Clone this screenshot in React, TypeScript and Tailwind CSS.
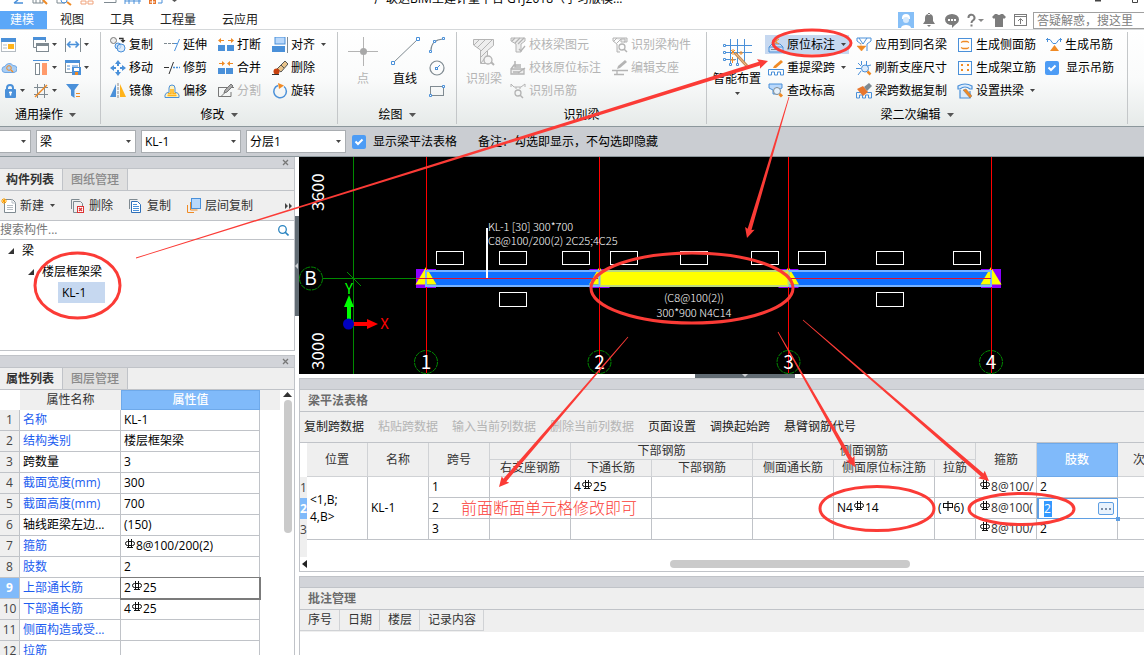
import React, { ReactNode } from "react";

const BLUE = "#4a90d9";
const GREY = "#7f8a91";
const ORANGE = "#f08a24";
const PALE = "#b4b4b4";

function Svg({ children, w = 16, h = 16 }: { children: ReactNode, w?: number, h?: number }) {
    return (
        <svg width={w} height={h} viewBox={`0 0 ${w} ${h}`} fill="none" className="shrink-0">
            {children}
        </svg>
    );
}

// Small ribbon icons
const icons: Record<string, ReactNode> = {
    form: <Svg><rect x="0.5" y="2.5" width="14" height="12" fill="#fff" stroke="#b5bcc2" /><rect x="0" y="1" width="15" height="4" fill={BLUE} /><path d="M2 8h4M2 11h4" stroke="#b5bcc2" /><rect x="7" y="7" width="6" height="5" fill="#ffb31a" /></Svg>,
    cloud: <Svg><path d="M4 12.500a3 3 0 0 1 0-6 4.500 4.500 0 0 1 8-1 3.500 3.500 0 0 1 1 7z" fill="#a9cdf3" stroke="#6fa8e6" /><circle cx="8" cy="8" r="2.300" stroke={ORANGE} /><path d="M10 10l2 2" stroke={ORANGE} strokeWidth="1.500" /></Svg>,
    lock: <Svg><path d="M6 7V5a3 3 0 0 1 6 0v2" stroke={BLUE} strokeWidth="2" /><rect x="4" y="6" width="11" height="9" rx="1" fill={BLUE} /><path d="M9.500 8.500v4M8 9.500h3" stroke="#fff" strokeWidth="1.500" /></Svg>,
    windows: <Svg><path d="M4 10.500H.5V1h12v4" stroke={GREY} /><rect x="0" y="0" width="13" height="3" fill={BLUE} /><rect x="3.500" y="7.500" width="12" height="7" fill="#fff" stroke={GREY} /><rect x="3" y="6" width="13" height="3" fill={GREY} /></Svg>,
    columns: <Svg><path d="M0 .5h16" stroke={BLUE} /><rect x="2.500" y="3.500" width="4" height="11" fill="#fff" stroke={GREY} /><rect x="9" y="3" width="5" height="12" fill="#ff9a6b" /></Svg>,
    grid: <Svg><path d="M4.500 1v14M11.500 1v14M1 4.500h14M1 11.500h14" stroke={GREY} /><path d="M2 14L14 2" stroke={ORANGE} strokeWidth="1.500" /></Svg>,
    measure: <Svg><path d="M.5 1v14M15.500 1v14" stroke={GREY} /><path d="M3 7.500h10M5.500 4.500L2.500 7.500l3 3M10.500 4.500l3 3-3 3" stroke={BLUE} strokeWidth="1.500" /></Svg>,
    saveWin: <Svg><rect x=".5" y="1.500" width="14" height="11" fill="#fff" stroke={GREY} /><rect x="0" y="0" width="15" height="3" fill={BLUE} /><path d="M2 6h3M2 9h3M7 6h6" stroke={BLUE} /><rect x="7" y="7" width="9" height="8" fill={BLUE} /><rect x="9" y="8" width="5" height="3" fill="#fff" /><rect x="10" y="12" width="3" height="3" fill={ORANGE} /></Svg>,
    filter: <Svg><path d="M1 1h13L9.500 7v8L6 12.500V7z" fill={BLUE} /><path d="M11 10.500h4M11 13.500h4" stroke={ORANGE} /></Svg>,
    copy: <Svg><circle cx="3.500" cy="3.500" r="3" fill="#eee" stroke="#777" /><path d="M9 1.500h4v2" stroke="#333" strokeWidth="1.300" /><path d="M10.500 3h5L13 6z" fill="#333" /><circle cx="8" cy="9" r="3" fill="#cfe3f8" stroke={BLUE} /><circle cx="11" cy="11" r="4" fill="#cfe3f8" fillOpacity=".7" stroke={BLUE} /></Svg>,
    move: <Svg><path d="M8 0l3 4H5zM8 16l3-4H5zM0 8l4-3v6zM16 8l-4-3v6z" fill={BLUE} /><path d="M8 3v3M8 10v3M3 8h3M10 8h3" stroke={BLUE} strokeWidth="2" /></Svg>,
    mirror: <Svg><path d="M6 1v13H0z" fill={BLUE} /><path d="M8 0v16" stroke="#888" strokeDasharray="3 1" /><path d="M10 1v13h6z" fill="#ffb31a" /></Svg>,
    extend: <Svg><path d="M0 6.500h10" stroke={GREY} strokeDasharray="3 1" /><path d="M10 6.500h3" stroke={BLUE} /><path d="M15.500 2l-5 12" stroke={BLUE} /></Svg>,
    trim: <Svg><path d="M0 7.500h5" stroke="#333" /><path d="M9.500 2L5 14" stroke="#333" /><path d="M9 7.500h7" stroke={BLUE} strokeDasharray="2 1" strokeWidth="1.500" /></Svg>,
    offset: <Svg><path d="M1 14.500h14v-2.500q-1-3-4-2.500V5a3 3 0 0 0-6 0v4.500q-3-.5-4 2.500z" fill="#fff3c4" stroke={BLUE} /><path d="M3.500 12.500h9M7 6v4.500H4M9 6v4.500h3" stroke="#ffb31a" strokeWidth="1.500" /></Svg>,
    split: <Svg><rect x="0" y="8" width="7" height="6" fill={BLUE} /><rect x="9" y="8" width="7" height="6" fill={BLUE} /><path d="M6 3.500H1M10 3.500h5" stroke={ORANGE} /><path d="M3 1L0 3.500 3 6zM13 1l3 2.500L13 6z" fill={ORANGE} /></Svg>,
    merge: <Svg><rect x="0" y="8" width="7" height="6" fill={BLUE} /><rect x="8" y="8" width="7" height="6" fill={BLUE} /><path d="M1 3.500h5M10 3.500h5" stroke={ORANGE} /><path d="M4 1l3 2.500L4 6zM12 1L9 3.500 12 6z" fill={ORANGE} /></Svg>,
    cut: <Svg><path d="M9 4.500H.5v9H13V9" stroke="#777" /><path d="M0 4.500h16M3 13.500l4-4" stroke="#777" /><path d="M6 10l1-3 6-6 2 2-6 6z" fill="#aaa" stroke="#777" /></Svg>,
    align: <Svg><rect x="3" y="0" width="10" height="7" fill="#b9d8fb" stroke={BLUE} /><rect x="0" y="9" width="13" height="6" fill={BLUE} /><path d="M15.500 0v16" stroke={GREY} /></Svg>,
    erase: <Svg><path d="M13 1l3 3-7 8-4-3z" fill="#e8c48c" stroke="#555" /><path d="M9 5l3 3" stroke="#555" /><circle cx="4.500" cy="11.500" r="3" fill="#c8410e" /><path d="M0 14.500h7" stroke="#333" /></Svg>,
    rotate: <Svg><path d="M6 2.500a6.300 6.300 0 1 0 6 1" stroke={BLUE} strokeWidth="1.500" /><path d="M6 0l6 2.500L7 6z" fill={ORANGE} /></Svg>,
    arc: <Svg><path d="M2 13Q2.500 3 14 2" stroke={GREY} strokeWidth="1.200" /><path d="M.5 13.500h2v2h-2zM4.500 3.500h2v2h-2zM13.500.5h2v2h-2z" fill="#fff" stroke={BLUE} /></Svg>,
    circle: <Svg><circle cx="8" cy="8" r="7" stroke={GREY} strokeWidth="1.200" /><path d="M8 8l3-3" stroke={BLUE} /><rect x="6.500" y="7.500" width="2" height="2" fill="#fff" stroke={BLUE} /></Svg>,
    rect: <Svg><rect x="1.500" y="3.500" width="13" height="9" stroke={GREY} /><path d="M.5 11.500h2v2h-2zM13.500 2.500h2v2h-2z" fill="#fff" stroke={BLUE} /></Svg>,
    beamCheck: <Svg><path d="M1 1h14v3l-4 3v8H6V7L1 4z" stroke={PALE} fill="#eee" /><path d="M2 4l3-3M5 6l5-5M8 7l6-6M9 12l2 2 4-5" stroke={PALE} strokeWidth="1.300" /></Svg>,
    noteCheck: <Svg><path d="M1 9h13v5H1zM1 9l3-4h7" stroke={PALE} fill="#eee" strokeWidth="1.300" /><path d="M5 1v6h6M3 12h7M8 13l7-5" stroke={PALE} strokeWidth="1.500" /></Svg>,
    hangFind: <Svg><path d="M1 1l3 3h7l4-3M1 4v-3M15 4v-3M6 4v2M10 4v2" stroke={PALE} /><circle cx="8" cy="10" r="3" stroke={PALE} strokeWidth="1.300" /><path d="M10 12l3 3" stroke={PALE} strokeWidth="1.500" /></Svg>,
    beamFind: <Svg><path d="M1 1h14v4h-3M1 1v3l4 3v8h3" stroke={PALE} fill="#eee" /><path d="M2 4l3-3M5 6l4-4M9 2h4v3H9z" stroke={PALE} /><circle cx="10" cy="10" r="3" stroke={PALE} strokeWidth="1.300" /><path d="M12 12l3 3" stroke={PALE} strokeWidth="1.500" /></Svg>,
    editSeat: <Svg><path d="M0 10.500h16M2 14.500h10M5 11v3" stroke={PALE} strokeWidth="1.300" /><path d="M5 9l1-3 7-6 2 2-7 6z" fill={PALE} /></Svg>,
    inPlace: <Svg><path d="M1 10h14v5H1zM1 10l3-3h8l3 3" stroke={BLUE} fill="#cfe0f5" /><path d="M3 12.500h9" stroke={GREY} /><path d="M8 0v7M5 3l6 4M11 2L5 6" stroke={ORANGE} /></Svg>,
    respan: <Svg><path d="M.5 15V9.500h15V15h-3v-3h-3v3h-3v-3h-3v3z" stroke={BLUE} /><path d="M5 8l1-2 7-6 2 2-7 6z" fill={ORANGE} /></Svg>,
    elevation: <Svg><path d="M1 1h13v4l-4 2v4H5V7L1 5z" fill="#b9d8fb" stroke={BLUE} /><circle cx="9" cy="8" r="3.500" fill="#e5f1fd" stroke={GREY} /><path d="M11.500 11l2.500 2.500" stroke={ORANGE} strokeWidth="3" /></Svg>,
    apply: <Svg><path d="M1 1h14v3l-4 3v7M1 1v3l4 3M3 1l4 6 4-6" stroke={BLUE} /><path d="M5 6v4M1 9h9l-4.500 5z" fill={ORANGE} stroke={ORANGE} strokeWidth="0.500" /></Svg>,
    refresh: <Svg><path d="M0 8.500h5M5.500 1v4M2 3l3 3M10.500 1v4M11 6l4-1M5 11l-3 4" stroke={BLUE} /><circle cx="9" cy="8.500" r="3.500" fill="#dcebfb" stroke={BLUE} /><path d="M11.500 11.500l3 3" stroke={ORANGE} strokeWidth="2.500" /></Svg>,
    spanCopy: <Svg><path d="M.5 15V9.500h15V15h-3v-3h-3v3h-3v-3h-3v3z" stroke={BLUE} /><path d="M1 6l6-3 5 6-5 4z" fill="#e8772e" /><path d="M8 4l5-4 3 3-5 5z" fill={GREY} /></Svg>,
    sideBar: <Svg><rect x="1.500" y="1.500" width="13" height="13" stroke={BLUE} /><path d="M4 5.500l2-1h4l2 1M4 10.500l2 1h4l2-1" stroke={ORANGE} strokeWidth="1.300" /></Svg>,
    erectBar: <Svg><rect x="1.500" y="1.500" width="13" height="13" stroke={BLUE} /><path d="M4 4h2v2H4zM10 4h2v2h-2zM4 9h2v2H4zM10 9h2v2h-2z" fill={ORANGE} /></Svg>,
    arch: <Svg><path d="M1 6V3q7-4 14 0v3h-2q-5-4-10 0zM3 7v8h10V8" stroke={BLUE} fill="#dcebfb" strokeWidth="1.200" /><path d="M6 7l3-1 6 7-2 2z" fill={ORANGE} stroke="#777" strokeWidth=".5" /></Svg>,
    hang: <Svg><path d="M0 2.500h4l3 4h3l3-4h3M1.500 1v4M14.500 1v4" stroke={BLUE} /><path d="M8.500 8l4.500 6H4z" fill={ORANGE} /></Svg>,
    newDoc: <Svg><path d="M3.500 1.500h8l3 3v10h-11z" fill="#fff" stroke={GREY} /><path d="M11 1v4h4M6 7.500h6M6 9.500h6M6 11.500h6" stroke="#b5bcc2" /><path d="M3 0v6M0 3h6M1 1l4 4M5 1L1 5" stroke="#ffa000" /></Svg>,
    delDoc: <Svg><path d="M1.500 11V1.500h8M3.500 14.500v-11h7l2 2v3M3.500 14.500h4" stroke={GREY} /><rect x="7.500" y="8.500" width="6" height="6" fill="#fff" stroke="#d33" /><path d="M9 10l3 3M12 10l-3 3" stroke="#d33" strokeWidth="1.300" /></Svg>,
    copyDoc: <Svg><path d="M1.500 11V1.500h8" stroke={GREY} /><path d="M3.500 3.500h6l3 3v8h-9z" fill="#fff" stroke="#2f6fb8" /><path d="M5 6.500h4M5 8.500h6M5 10.500h6M5 12.500h6" stroke={BLUE} /></Svg>,
    layerCopy: <Svg><path d="M1.500 7v7.500H8M4.500 4v8h7" stroke={ORANGE} /><rect x="5.500" y=".5" width="9" height="10" fill="#b9d8fb" stroke={BLUE} /></Svg>,
};

const bigIcons: Record<string, ReactNode> = {
    point: <Svg w={30} h={30}><path d="M0 15.500h30M15.500 1v29" stroke={PALE} /><circle cx="15.500" cy="15.500" r="3.500" fill="#a8a8a8" /></Svg>,
    line: <Svg w={30} h={30}><path d="M3 27L28 3" stroke={GREY} /><path d="M1.500 25.500h3v3h-3zM26.500 1.500h3v3h-3z" fill="#fff" stroke={BLUE} /></Svg>,
    beam: <Svg w={24} h={30}><path d="M1.500 3.500h20v6l-6 5v13h-7V14l-7-5z" fill="#eee" stroke={PALE} /><path d="M2 9l6-6M5 12l9-9M9 15L20 4M9 21l6-6M9 27l4-5" stroke={PALE} /><circle cx="16" cy="24" r="4" fill="#f5f5f5" stroke={PALE} strokeWidth="1.300" /><path d="M19 26l3 3" stroke={PALE} strokeWidth="2" /></Svg>,
    smart: <Svg w={30} h={30}><path d="M2 9.500h28M2 16.500h28M2 23.500h12M8.500 3v26M15.500 3v26M22.500 3v26" stroke={BLUE} /><path d="M1.500 8.500h2v2h-2zM1.500 15.500h2v2h-2zM1.500 22.500h2v2h-2zM7.500 27.500h2v2h-2zM14.500 27.500h2v2h-2z" fill="#fff" stroke={BLUE} /><path d="M9 14l4 4M13 14l-4 4M11 13v6M8 24h5M10.500 21v6M17 17h4M19 15v4" stroke={ORANGE} /><path d="M13 17l12 13" stroke="#c98a52" strokeWidth="3" /><path d="M13.500 17.500l11 12" stroke="#f4c690" /></Svg>,
};

function Caret() {
    return <svg width="5" height="3" viewBox="0 0 5 3" className="shrink-0"><path d="M0 0h5L2.500 3z" fill="#444" /></svg>;
}

type ToolProps = { icon: string, label?: string, arrow?: boolean, disabled?: boolean, active?: boolean };

function Tool({ icon, label, arrow, disabled, active }: ToolProps) {
    return (
        <button disabled={disabled} aria-label={label ?? icon} className={`flex h-[19px] items-center gap-[3px] whitespace-nowrap px-[3px] disabled:text-[#b4b4b4] ${active ? "bg-[#c6d8f0]" : ""}`}>
            {icons[icon]}
            {label && <span>{label}</span>}
            {arrow && <span className={label ? "pl-[3px]" : ""}><Caret /></span>}
        </button>
    );
}

function BigTool({ icon, label, arrow, disabled }: ToolProps) {
    return (
        <button disabled={disabled} className="flex flex-col items-center gap-[5px] whitespace-nowrap pt-[3px] disabled:text-[#b4b4b4]">
            {bigIcons[icon]}
            <span>{label}</span>
            {arrow && <Caret />}
        </button>
    );
}

function Column({ children }: { children: ReactNode }) {
    return <div className="grid auto-rows-[23px] items-center justify-items-start">{children}</div>;
}

function Group({ title, arrow, className, children }: { title: string, arrow?: boolean, className: string, children: ReactNode }) {
    return (
        <>
            <div className={`flex shrink-0 flex-col pt-[3px] ${className}`}>
                <div className="flex h-[70px]">{children}</div>
                <div className="flex h-[23px] items-center justify-center gap-[6px]">
                    {title}
                    {arrow && <svg width="7" height="4" viewBox="0 0 7 4"><path d="M0 0h7L3.500 4z" fill="#555" /></svg>}
                </div>
            </div>
            <div className="my-[2px] w-px shrink-0 bg-[#c4c7c9]" />
        </>
    );
}

function Check({ label }: { label: string }) {
    return (
        <label className="flex items-center gap-[7px] whitespace-nowrap">
            <span className="relative flex">
                <input type="checkbox" defaultChecked className="size-[14px] appearance-none rounded-[2px] bg-[#4d9cf5]" />
                <svg width="14" height="14" viewBox="0 0 14 14" className="pointer-events-none absolute inset-0"><path d="M3.500 6.500L6 9l4.500-4.500" fill="none" stroke="#fff" strokeWidth="2" /></svg>
            </span>
            {label}
        </label>
    );
}

function TitleBar() {
    return (
        <div className="relative flex h-[11px] items-end overflow-hidden">
            <svg width="180" height="11" viewBox="0 0 180 11" fill="none">
                <path d="M14 3h9M18 0l-4 3" stroke={BLUE} strokeWidth="1.500" />
                <path d="M33 0v3h10V0M36 0v3M40 0v3" stroke={GREY} /><path d="M43 0l4 4" stroke={ORANGE} strokeWidth="2" />
                <path d="M57 0v3h8" stroke={GREY} /><circle cx="64" cy="0" r="3" stroke={BLUE} /><path d="M67 2l4 3" stroke={ORANGE} strokeWidth="2" />
                <path d="M81 1h5v3h-5zM88 1h5v3h-5z" stroke="#f0a27a" />
                <path d="M104 2.500h12V0" stroke={GREY} />
                <path d="M125 4V0M129 4V0M134 4V0M139 4V0M125 1h16" stroke={BLUE} />
                <path d="M149 0h7v4h-7z" fill="#e8772e" /><path d="M150 2h5M152.500 0v4" stroke="#fff" /><path d="M158 3h4V0" stroke={BLUE} />
                <path d="M172 0h5l-2.500 2z" fill="#555" />
            </svg>
            <h1 className="ml-[194px] -translate-y-1 whitespace-nowrap leading-4">广联达BIM土建计量平台 GTJ2018（学习版模...</h1>
            <svg width="60" height="11" viewBox="0 0 60 11" className="ml-auto" fill="none"><path d="M11 .5h6" stroke="#444" strokeWidth="2" /><path d="M48.500 0v2.500h5V0" stroke="#444" /></svg>
        </div>
    );
}

function Tabs() {
    return (
        <nav className="flex h-[19px] items-stretch border-b border-[#d5d8da] text-[#222]">
            <button className="bg-[#5ba7f8] pl-[10px] pr-[13px] text-white">建模</button>
            <button className="px-[13px]">视图</button>
            <button className="px-[13px]">工具</button>
            <button className="px-[13px]">工程量</button>
            <button className="px-[13px]">云应用</button>
            <div className="ml-auto flex items-center text-[#808080]">
                <svg width="130" height="16" viewBox="898 11 130 16" fill="none" className="mr-[5px]">
                    <rect x="898" y="11" width="16" height="16" fill="#86bff7" />
                    <path d="M901 27c0-4 10-4 10 0zM902 17a4 4 0 0 1 8 0v1h-8z" fill="#fff" /><circle cx="906" cy="19" r="3" fill="#d6eafd" />
                    <path d="M923 23h12l-2-3v-3a4 4 0 0 0-8 0v3zM927 24h4l-2 2zM928 12h2v2h-2z" fill="#7c7c7c" />
                    <ellipse cx="952" cy="18.500" rx="7" ry="5.500" fill="#7c7c7c" /><path d="M952 22v5l4-4z" fill="#7c7c7c" /><path d="M948 18h2v2h-2zM951 18h2v2h-2zM954 18h2v2h-2z" fill="#fff" />
                    <path d="M968.500 17a3 3 0 1 1 4.500 2.300q-1.500.7-1.500 2.700M971.500 23.500v2" stroke="#7c7c7c" strokeWidth="2" /><path d="M978 18h6l-3 3z" fill="#888" />
                    <path d="M995 13h2q2 2 4 0h2l3 3-2 2-1-1v9h-8v-9l-1 1-2-2z" fill="#7c7c7c" />
                    <rect x="1014.500" y="13.500" width="12" height="11" stroke="#7c7c7c" /><path d="M1014 15.500h13M1020.500 23v-5M1018 20l2.500-2.500L1023 20" stroke="#7c7c7c" />
                </svg>
                <input aria-label="搜索" placeholder="答疑解惑，搜这里" className="h-[17px] w-[111px] border border-r-0 border-[#a0a0a0] pl-[3px] placeholder:text-[#808080]" />
            </div>
        </nav>
    );
}

function Ribbon() {
    return (
        <div className="flex h-[97px] overflow-hidden border-b border-[#8c979c] bg-linear-to-b from-white via-[#fafbfb] to-[#e6eae9]">
            <Group title="通用操作" arrow className="w-[100px] pr-[9px]">
                <div className="-ml-[2px] grid auto-rows-[23px] grid-cols-[32px_32px_32px] items-center">
                    <Tool icon="form" /><Tool icon="windows" arrow /><Tool icon="measure" arrow />
                    <Tool icon="cloud" /><Tool icon="columns" arrow /><Tool icon="saveWin" arrow />
                    <Tool icon="lock" arrow /><Tool icon="grid" arrow /><Tool icon="filter" />
                </div>
            </Group>
            <Group title="修改" arrow className="w-[236px]">
                <div className="flex gap-[5px] pl-[6px]">
                    <Column><Tool icon="copy" label="复制" /><Tool icon="move" label="移动" /><Tool icon="mirror" label="镜像" /></Column>
                    <Column><Tool icon="extend" label="延伸" /><Tool icon="trim" label="修剪" /><Tool icon="offset" label="偏移" /></Column>
                    <Column><Tool icon="split" label="打断" /><Tool icon="merge" label="合并" /><Tool icon="cut" label="分割" disabled /></Column>
                    <Column><Tool icon="align" label="对齐" arrow /><Tool icon="erase" label="删除" /><Tool icon="rotate" label="旋转" /></Column>
                </div>
            </Group>
            <Group title="绘图" arrow className="w-[118px]">
                <div className="grid grid-cols-[42px_42px_22px] pl-[4px]">
                    <BigTool icon="point" label="点" disabled />
                    <BigTool icon="line" label="直线" />
                    <Column><Tool icon="arc" /><Tool icon="circle" /><Tool icon="rect" /></Column>
                </div>
            </Group>
            <Group title="识别梁" className="w-[249px]">
                <div className="flex gap-[5px] pl-[9px]">
                    <BigTool icon="beam" label="识别梁" disabled />
                    <Column><Tool icon="beamCheck" label="校核梁图元" disabled /><Tool icon="noteCheck" label="校核原位标注" disabled /><Tool icon="hangFind" label="识别吊筋" disabled /></Column>
                    <Column><Tool icon="beamFind" label="识别梁构件" disabled /><Tool icon="editSeat" label="编辑支座" disabled /></Column>
                </div>
            </Group>
            <Group title="梁二次编辑" arrow className="w-[420px]">
                <div className="flex gap-1 pl-[6px]">
                    <BigTool icon="smart" label="智能布置" arrow />
                    <Column><Tool icon="inPlace" label="原位标注" arrow active /><Tool icon="respan" label="重提梁跨" arrow /><Tool icon="elevation" label="查改标高" /></Column>
                    <Column><Tool icon="apply" label="应用到同名梁" /><Tool icon="refresh" label="刷新支座尺寸" /><Tool icon="spanCopy" label="梁跨数据复制" /></Column>
                    <Column><Tool icon="sideBar" label="生成侧面筋" /><Tool icon="erectBar" label="生成架立筋" /><Tool icon="arch" label="设置拱梁" arrow /></Column>
                    <Column><Tool icon="hang" label="生成吊筋" /><div className="pl-[2px]"><Check label="显示吊筋" /></div></Column>
                </div>
            </Group>
        </div>
    );
}

function Picker({ value, label, className, edge }: { value: string, label: string, className: string, edge?: boolean }) {
    return (
        <div className={`relative ${className}`}>
            <select aria-label={label} className={`h-[23px] w-full appearance-none border border-[#a9adb1] bg-white pl-[3px] ${edge ? "border-l-0" : ""}`}>
                <option>{value}</option>
            </select>
            <span className="pointer-events-none absolute right-[5px] top-[10px]"><Caret /></span>
        </div>
    );
}

function FilterBar() {
    return (
        <div className="flex h-[30px] items-center gap-[5px] border-b border-[#8c979c] bg-[#cacdd2]">
            <Picker label="楼层" value="" className="w-[31px]" edge />
            <Picker label="构件类别" value="梁" className="w-[100px]" />
            <Picker label="构件" value="KL-1" className="w-[100px]" />
            <Picker label="分层" value="分层1" className="w-[100px]" />
            <div className="pl-[1px]"><Check label="显示梁平法表格" /></div>
            <span className="pl-4">备注：勾选即显示，不勾选即隐藏</span>
        </div>
    );
}

function PanelHead({ tabs }: { tabs: string[] }) {
    return (
        <>
            <div className="flex h-3 items-center justify-end border-b border-[#c0c3c8] bg-[#d2d4d9] pr-[5px]">
                <button aria-label="关闭"><svg width="7" height="7" viewBox="0 0 7 7"><path d="M1 1l5 5M6 1L1 6" stroke="#777" strokeWidth="1.300" /></svg></button>
            </div>
            <div className="flex h-[22px] border-b border-[#c0c3c8] bg-[#efefef]">
                <button className="px-[6px] pr-2 font-bold text-[#333]">{tabs[0]}</button>
                <button className="border-x border-[#c0c3c8] bg-[#e0e0e0] px-2 font-medium text-[#8a8a8a]">{tabs[1]}</button>
            </div>
        </>
    );
}

function Twisty() {
    return <svg width="6" height="6" viewBox="0 0 6 6"><path d="M6 0v6H0z" fill="#333" /></svg>;
}

function ComponentList() {
    return (
        <section className="flex h-[194px] flex-col border-b border-r border-[#c0c3c8] bg-white">
            <PanelHead tabs={["构件列表", "图纸管理"]} />
            <div className="flex h-[30px] shrink-0 items-center border-b border-[#c0c3c8] bg-[#efefef] text-[#333]">
                <div className="-ml-[2px] flex gap-[9px]">
                    <Tool icon="newDoc" label="新建" arrow />
                    <Tool icon="delDoc" label="删除" />
                    <Tool icon="copyDoc" label="复制" />
                    <Tool icon="layerCopy" label="层间复制" />
                </div>
                <svg width="7" height="6" viewBox="0 0 7 6" className="ml-auto mr-[2px]"><path d="M0 0l3 3-3 3zM4 0l3 3-3 3z" fill="#444" /></svg>
            </div>
            <div className="flex h-[19px] shrink-0 items-center border-b border-[#c0c3c8] pr-[5px]">
                <input aria-label="搜索构件" placeholder="搜索构件..." className="min-w-0 flex-1 placeholder:text-[#777]" />
                <svg width="11" height="11" viewBox="0 0 11 11" fill="none"><circle cx="4.500" cy="4.500" r="3.800" stroke="#2a84c0" strokeWidth="1.300" /><path d="M7 7l3.500 3.500" stroke="#2a84c0" strokeWidth="1.600" /></svg>
            </div>
            <ul className="leading-[21px]">
                <li className="flex items-center gap-2 pl-2"><Twisty />梁</li>
                <li className="flex items-center gap-2 pl-7"><Twisty />楼层框架梁</li>
                <li className="pl-[58px]"><span className="inline-block w-[47px] bg-[#c6d8f0] pl-1">KL-1</span></li>
            </ul>
        </section>
    );
}

// Steel grade mark used in front of bar diameters
function Bar({ plain }: { plain?: boolean }) {
    return (
        <svg width="10" height="10" viewBox="0 0 10 10" className="mx-px mb-px inline align-baseline" fill="none" stroke="#111">
            {plain
                ? <><rect x=".5" y="2.500" width="9" height="4" /><path d="M5 0v10" strokeWidth="1.300" /></>
                : <><path d="M2.500 2.500h5a2 2 0 0 1 0 4h-5a2 2 0 0 1 0-4zM3.500 0v9M6.500 0v9M2 8.500h6" /></>}
        </svg>
    );
}

const props: [string, ReactNode, boolean?][] = [
    ["名称", "KL-1"],
    ["结构类别", "楼层框架梁"],
    ["跨数量", "3", true],
    ["截面宽度(mm)", "300"],
    ["截面高度(mm)", "700"],
    ["轴线距梁左边...", "(150)", true],
    ["箍筋", <><Bar />8@100/200(2)</>],
    ["肢数", "2"],
    ["上部通长筋", <>2<Bar />25</>],
    ["下部通长筋", <>4<Bar />25</>],
    ["侧面构造或受...", ""],
    ["拉筋", ""],
];

function PropertyList() {
    return (
        <section className="mt-1 flex min-h-0 flex-1 flex-col overflow-hidden border-r border-t border-[#c0c3c8] bg-white">
            <PanelHead tabs={["属性列表", "图层管理"]} />
            <div className="flex min-h-0 flex-1">
                <table className="table-fixed self-start border-separate border-spacing-0">
                    <colgroup><col className="w-5" /><col className="w-[101px]" /><col className="w-[139px]" /></colgroup>
                    <thead>
                        <tr className="h-5 text-[#333]">
                            <th></th>
                            <th className="bg-[#efefef] font-normal">属性名称</th>
                            <th className="border border-[#6ea9ea] bg-[#80bafa] font-medium text-white">属性值</th>
                        </tr>
                    </thead>
                    <tbody>
                        {props.map(([name, value, plain], i) => (
                            <tr key={name} className="h-[21px]">
                                <td className={`border-b border-r border-[#c0c3c8] p-0 text-center ${i === 8 ? "bg-[#80bafa] font-bold text-white" : "bg-[#efefef] text-[#444]"}`}>{i + 1}</td>
                                <td className={`whitespace-nowrap border-b border-r border-[#c0c3c8] p-0 pl-[3px] ${plain ? "" : "text-[#1c5df0]"}`}>{name}</td>
                                <td className={`whitespace-nowrap border-b border-r p-0 pl-[3px] ${i === 8 ? "border-[#7b7b7b] outline outline-1 outline-[#7b7b7b]" : "border-[#c0c3c8]"}`}>{value}</td>
                            </tr>
                        ))}
                    </tbody>
                </table>
                <div className="h-5 w-5 bg-[#efefef]" />
                <div className="ml-auto flex w-[13px] flex-col items-center gap-[3px] pt-[2px]">
                    <svg width="9" height="5" viewBox="0 0 9 5"><path d="M0 5h9L4.500 0z" fill="#333" /></svg>
                    <div className="h-[133px] w-2 rounded bg-[#cacaca]" />
                </div>
            </div>
        </section>
    );
}

const axes = [[426, "1"], [599.5, "2"], [788.5, "3"], [991, "4"]] as const;
const slots = [436, 499, 562, 610, 680, 751, 798, 876, 953];

// Plan view of axis B with the three spans of KL-1
function PlanView() {
    return (
        <svg viewBox="299 157 845 217" className="block h-[217px] w-full bg-black font-['Noto_Sans_CJK_SC',sans-serif]" fill="none">
            <path d="M353.500 157v217M299 278.500h127M347 272l14 14" stroke="#008a00" />
            <circle cx="311" cy="278.500" r="11.500" fill="#000" stroke="#008a00" strokeDasharray="5 1" />
            {axes.map(([x, n]) => (
                <g key={n}>
                    <rect x={x - 10} y="269" width="20" height="19" fill="#8b00ff" />
                    <circle cx={x} cy="362" r="11.500" stroke="#008a00" strokeDasharray="5 1" />
                </g>
            ))}
            <path d="M426 271h565v15H426z" fill="#0f70ff" />
            {axes.map(([x, n]) => <path key={n} d={`M${x} 267l10.500 17.500h-21z`} fill="#ff0" />)}
            <path d="M600 271h188v15H600z" fill="#ff0" />
            <path d="M426 271h565v15H426zM599.500 271v15M788.500 271v15" stroke="#76b2ff" strokeWidth="2" />
            <path d="M600 271h188v15H600" stroke="#ff0" strokeWidth="1" />
            <path d="M416 278.500h182M790 278.500h201" stroke="#e01030" />
            <path d="M426.500 157v113M426.500 287v86M599.500 157v113M599.500 287v86M788.500 157v113M788.500 287v86M991.500 157v113M991.500 287v86" stroke="#f00" />
            <path d="M487 228v50" stroke="#fff" strokeWidth="2" />
            {slots.map((x) => <rect key={x} x={x + 0.5} y="251.500" width="27" height="13" stroke="#fff" />)}
            <rect x="499.500" y="292.500" width="27" height="14" stroke="#fff" />
            <rect x="876.500" y="292.500" width="27" height="14" stroke="#fff" />
            <path d="M349 319v-12" stroke="#0f0" strokeWidth="4" /><path d="M349 295l5 12h-10z" fill="#0f0" />
            <path d="M353 324h14" stroke="#f00" strokeWidth="4" /><path d="M378 324l-11 5v-10z" fill="#f00" />
            <circle cx="348.500" cy="324" r="5.500" fill="#0000c0" />
            <g fontSize="15" textAnchor="middle"><text x="349" y="294" fill="#0f0">Y</text><text x="384.500" y="329" fill="#f00">X</text></g>
            <g fill="#fff" fontSize="19" textAnchor="middle">
                <text x="310.500" y="285">B</text>
                {axes.map(([x, n]) => <text key={n} x={x} y="369">{n}</text>)}
            </g>
            <g fill="#fff" fontSize="17">
                <text transform="translate(324 211) rotate(-90)">3600</text>
                <text transform="translate(324 370) rotate(-90)">3000</text>
            </g>
            <g fill="#fff" fontSize="11" className="font-light">
                <text x="488" y="231">KL-1 [30] 300*700</text>
                <text x="488" y="245">C8@100/200(2) 2C25;4C25</text>
                <text x="694" y="302" textAnchor="middle">(C8@100(2))</text>
                <text x="694" y="317" textAnchor="middle">300*900 N4C14</text>
            </g>
        </svg>
    );
}

function PaneTitle({ text }: { text: string }) {
    return (
        <>
            <div className="h-[11px] border-b border-[#c0c3c8] bg-[#d2d4d9]" />
            <h2 className="h-[22px] border-b border-[#c0c3c8] bg-[#efefef] pl-2 font-bold leading-[22px] text-[#6b6b6b]">{text}</h2>
        </>
    );
}

const head = "border-b border-r border-[#d0d2d5] bg-[#efefef] p-0 font-normal text-[#333] whitespace-nowrap leading-4";
const cell = "border-b border-r border-[#c0c3c8] p-0 pl-[3px] whitespace-nowrap overflow-hidden";

function BeamTable() {
    return (
        <table className="w-[880px] table-fixed border-separate border-spacing-0">
            <colgroup>
                <col className="w-[7px]" /><col className="w-[61px]" /><col className="w-[61px]" /><col className="w-[61px]" />
                <col className="w-[81px]" /><col className="w-[81px]" /><col className="w-[101px]" /><col className="w-[81px]" />
                <col className="w-[101px]" /><col className="w-[41px]" /><col className="w-[61px]" /><col className="w-[81px]" /><col />
            </colgroup>
            <thead>
                <tr className="h-4">
                    <th rowSpan={2} className="p-0"></th>
                    <th rowSpan={2} className={head}>位置</th>
                    <th rowSpan={2} className={head}>名称</th>
                    <th rowSpan={2} className={head}>跨号</th>
                    <th className={head}></th>
                    <th colSpan={2} className={head}>下部钢筋</th>
                    <th colSpan={3} className={head}>侧面钢筋</th>
                    <th rowSpan={2} className={head}>箍筋</th>
                    <th rowSpan={2} className="border border-l-0 border-[#6ea9ea] bg-[#80bafa] p-0 font-medium text-white">肢数</th>
                    <th rowSpan={2} className={`${head} pl-[15px] text-left`}>次</th>
                </tr>
                <tr className="h-4">
                    <th className={head}>右支座钢筋</th>
                    <th className={head}>下通长筋</th>
                    <th className={head}>下部钢筋</th>
                    <th className={head}>侧面通长筋</th>
                    <th className={head}>侧面原位标注筋</th>
                    <th className={head}>拉筋</th>
                </tr>
            </thead>
            <tbody>
                {[1, 2, 3].map((n) => (
                    <tr key={n} className="h-[21px]">
                        <td className={`p-0 ${n === 2 ? "bg-[#80bafa] font-bold text-white" : "bg-[#efefef] text-[#444]"}`}>{n}</td>
                        {n === 1 && <td rowSpan={3} className={`${cell} leading-[17px]`}>&lt;1,B;<br />4,B&gt;</td>}
                        {n === 1 && <td rowSpan={3} className={cell}>KL-1</td>}
                        <td className={cell}>{n}</td>
                        <td className={cell}></td>
                        <td className={cell}>{n === 1 && <>4<Bar />25</>}</td>
                        <td className={cell}></td>
                        <td className={cell}></td>
                        <td className={cell}>{n === 2 && <>N4<Bar />14</>}</td>
                        <td className={cell}>{n === 2 && <>(<Bar plain />6)</>}</td>
                        <td className={`${cell} text-[#333]`}><Bar />{n === 2 ? "8@100(" : "8@100/"}</td>
                        {n === 2 ? (
                            <td className="relative border border-l-2 border-[#5f9fe3] p-0 pl-[5px]">
                                <div className="flex items-center justify-between pr-[3px]">
                                    <input aria-label="肢数" defaultValue="2" className="w-2 bg-[#3399ff] text-white" />
                                    <button aria-label="更多" className="flex h-[13px] w-4 items-center justify-center rounded-[2px] border border-[#5f9fe3] bg-[#e8f2fd]">
                                        <svg width="10" height="2" viewBox="0 0 10 2"><path d="M0 0h2v2H0zM4 0h2v2H4zM8 0h2v2H8z" fill="#7c8ea6" /></svg>
                                    </button>
                                </div>
                                <span className="absolute -bottom-[3px] -right-[3px] size-1 bg-[#5f9fe3]" />
                            </td>
                        ) : <td className={cell}>2</td>}
                        <td className={cell}></td>
                    </tr>
                ))}
            </tbody>
        </table>
    );
}

function Workspace() {
    return (
        <main className="flex min-w-0 flex-1 flex-col">
            <PlanView />
            <div className="flex h-1 justify-center pl-[47px]">
                <div className="flex w-[100px] justify-center bg-[#626c74]"><svg width="6" height="3" viewBox="0 0 6 3"><path d="M0 0h6L3 3z" fill="#cdd0d3" /></svg></div>
            </div>
            <section className="flex h-[194px] shrink-0 flex-col overflow-hidden border-b border-l border-t border-[#c0c3c8]">
                <PaneTitle text="梁平法表格" />
                <div className="flex h-[31px] shrink-0 items-center gap-[14px] whitespace-nowrap border-b border-[#c0c3c8] bg-[#efefef] pl-1 text-[#222]">
                    <button>复制跨数据</button>
                    <button disabled className="text-[#b4b4b4]">粘贴跨数据</button>
                    <button disabled className="text-[#b4b4b4]">输入当前列数据</button>
                    <button disabled className="text-[#b4b4b4]">删除当前列数据</button>
                    <button>页面设置</button>
                    <button>调换起始跨</button>
                    <button>悬臂钢筋代号</button>
                </div>
                <BeamTable />
                <div className="flex-1"><div className="h-full w-[7px] bg-[#efefef]" /></div>
                <div className="flex h-[14px] shrink-0 items-center">
                    <svg width="5" height="8" viewBox="0 0 5 8" className="ml-[2px]"><path d="M5 0v8L0 4z" fill="#222" /></svg>
                    <div className="ml-[43%] h-2 w-[240px] rounded bg-[#cacaca]" />
                </div>
            </section>
            <section className="mt-1 flex-1 border-l border-t border-[#c0c3c8]">
                <PaneTitle text="批注管理" />
                <div className="flex h-[22px] bg-[#efefef] pb-px leading-5 text-[#333]">
                    {["序号", "日期", "楼层", "记录内容"].map((t) => <div key={t} className="border-b border-r border-[#d0d2d5] pl-2 pr-[7px]">{t}</div>)}
                </div>
            </section>
        </main>
    );
}

// Arrow whose shaft widens from a hairline towards the head
function Arrow({ from, to }: { from: [number, number], to: [number, number] }) {
    const len = Math.hypot(to[0] - from[0], to[1] - from[1]);
    const angle = Math.atan2(to[1] - from[1], to[0] - from[0]) * 180 / Math.PI;
    return <path transform={`translate(${from[0]} ${from[1]}) rotate(${angle})`} fill="#fb3b36" d={`M0 -.4L${len - 9} -2L${len - 10} -5L${len} 0L${len - 10} 5L${len - 9} 2L0 .4z`} />;
}

function Markup() {
    return (
        <svg width="1144" height="655" viewBox="0 0 1144 655" className="pointer-events-none absolute left-0 top-0">
            <g fill="none" stroke="#fb3b36" strokeWidth="3">
                <ellipse cx="812" cy="43" rx="39" ry="13" />
                <ellipse cx="77.500" cy="285.500" rx="42.500" ry="32.500" />
                <ellipse cx="692" cy="288" rx="101" ry="35" />
                <ellipse cx="877" cy="508.500" rx="57" ry="22" />
                <ellipse cx="1021.500" cy="509" rx="52.500" ry="15.500" />
            </g>
            <Arrow from={[136, 258]} to={[768, 61]} />
            <Arrow from={[789, 97]} to={[747, 238]} />
            <Arrow from={[628, 337]} to={[499, 487]} />
            <Arrow from={[778, 332]} to={[855, 467]} />
            <Arrow from={[803, 320]} to={[989, 481]} />
            <text x="461" y="514" fill="#fb3b36" fontSize="16" fontWeight="300">前面断面单元格修改即可</text>
        </svg>
    );
}

export default function App() {
    return (
        <div className="relative flex h-screen flex-col overflow-hidden bg-white font-['Open_Sans','Noto_Sans_CJK_SC',sans-serif] text-[12px] leading-4 text-black">
            <TitleBar />
            <Tabs />
            <Ribbon />
            <FilterBar />
            <div className="flex min-h-0 flex-1">
                <aside className="flex w-[295px] shrink-0 flex-col">
                    <ComponentList />
                    <PropertyList />
                </aside>
                <div className="w-1 shrink-0 pt-[59px]">
                    <div className="flex h-[100px] items-center bg-[#626c74]"><svg width="3" height="6" viewBox="0 0 3 6"><path d="M3 0v6L0 3z" fill="#cdd0d3" /></svg></div>
                </div>
                <Workspace />
            </div>
            <Markup />
        </div>
    );
}
